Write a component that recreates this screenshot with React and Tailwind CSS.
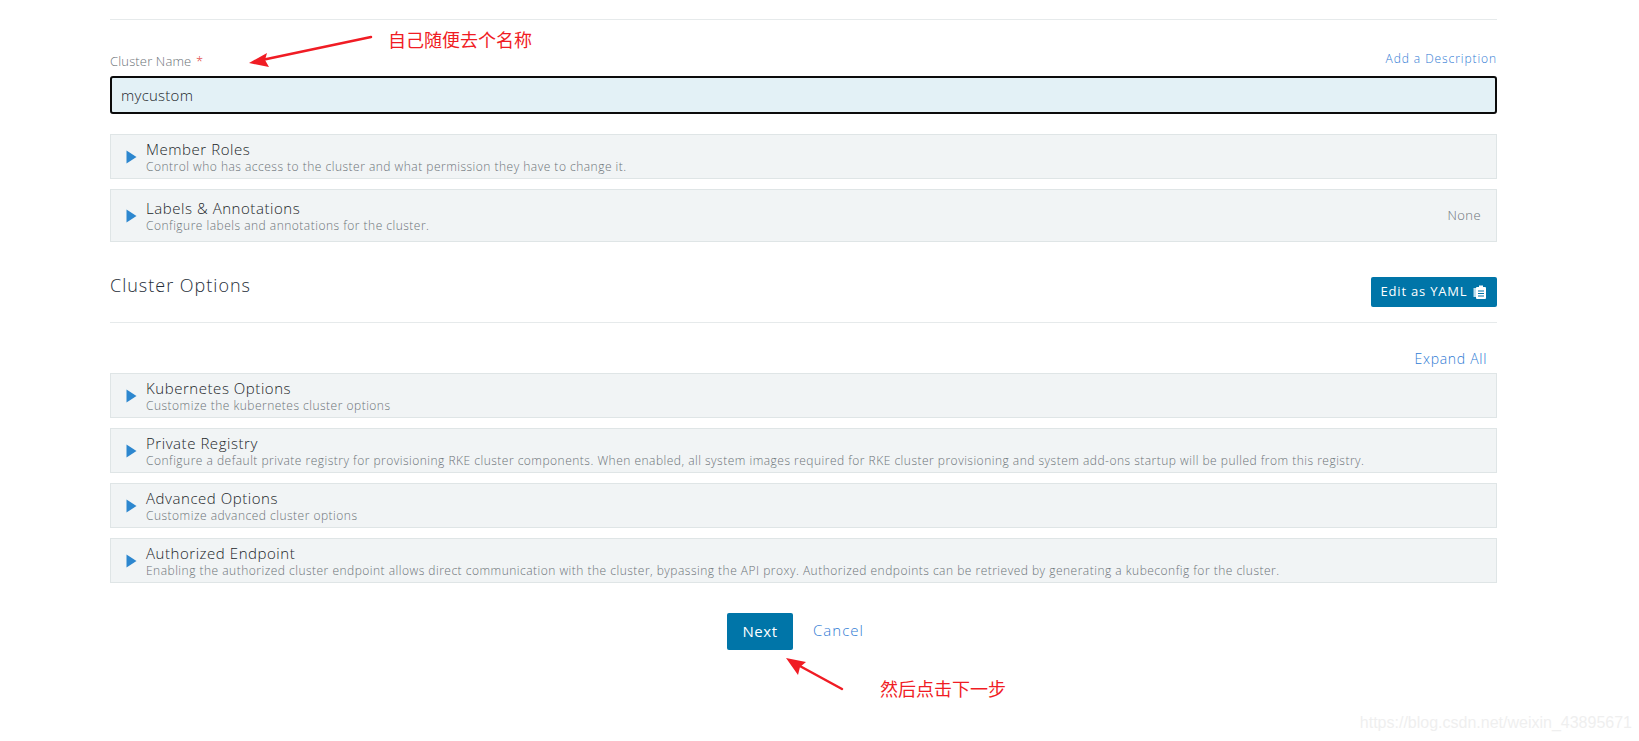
const FONT = "font-['Open_Sans',sans-serif]"

const Caret = () => (
  <svg width="11" height="14" viewBox="0 0 11 14" className="shrink-0">
    <path d="M0.5 0.5 L10.5 7 L0.5 13.5 Z" fill="#2d87cf" />
  </svg>
)

const Accordion = ({ title, desc, right, className = 'h-[45px]' }) => (
  <div className={`flex items-center border border-[#dfe5e6] bg-[#f1f4f5] pl-[15px] pr-[15px] ${className}`}>
    <Caret />
    <div className="ml-[9px] flex-1 min-w-0">
      <div className="text-[15px] leading-[19px] font-light tracking-[0.55px] text-[#22262a]">{title}</div>
      <div className="text-[12px] leading-[15px] font-light tracking-[0.49px] text-[#6c7378] whitespace-nowrap">{desc}</div>
    </div>
    {right && <div className="text-[13px] font-light tracking-[0.45px] text-[#6c7378]">{right}</div>}
  </div>
)

const ClipboardIcon = () => (
  <svg width="14" height="14" viewBox="0 0 14 14" className="ml-[6px]">
    <rect x="0.5" y="3" width="5" height="9" fill="#bfe0ee" />
    <rect x="3" y="2" width="10" height="12" rx="1" fill="#ffffff" />
    <rect x="6" y="0.5" width="4" height="3" fill="#ffffff" />
    <path d="M5 6h6M5 8.5h6M5 11h6" stroke="#0075a8" strokeWidth="1" />
  </svg>
)

export default function App() {
  return (
    <div className={`relative h-[741px] overflow-hidden bg-white ${FONT}`}>
      <main className="ml-[110px] w-[1387px] pt-[19px]">
        <div className="h-[1px] bg-[#e6eaeb]" />

        {/* Cluster name */}
        <div className="mt-[32px] flex h-[20px] items-center justify-between">
          <div className="text-[13px] font-light tracking-[0.15px] text-[#6c7378]">
            Cluster Name <span className="ml-[1px] text-[#e0403a]">*</span>
          </div>
          <a className="text-[12px] font-light tracking-[0.92px] text-[#2f7bd4] -mt-[7px]">Add a Description</a>
        </div>
        <div className="mt-[4px] flex h-[38px] items-center rounded-[3px] border-2 border-[#0b0b0b] bg-[#e3f1f6] px-[9px] text-[15px] font-light tracking-[0.25px] text-[#22262a]">
          mycustom
        </div>

        <div className="mt-[20px] flex flex-col gap-[10px]">
          <Accordion
            title="Member Roles"
            desc="Control who has access to the cluster and what permission they have to change it."
          />
          <Accordion
            title="Labels & Annotations"
            desc="Configure labels and annotations for the cluster."
            right="None"
            className="h-[53px]"
          />
        </div>

        {/* Cluster options */}
        <div className="mt-[35px] flex h-[30px] items-center justify-between">
          <h2 className="-mt-[13px] text-[18px] font-light tracking-[1px] text-[#252d38]">Cluster Options</h2>
          <button className="flex h-[30px] w-[126px] items-center justify-center rounded-[2px] bg-[#0075a8] text-[13px] tracking-[0.8px] text-white">
            Edit as YAML
            <ClipboardIcon />
          </button>
        </div>
        <div className="mt-[15px] h-[1px] bg-[#e6eaeb]" />

        <div className="mt-[25px] flex h-[20px] items-center justify-end pr-[10px]">
          <a className="text-[14px] font-light tracking-[0.7px] text-[#2f7bd4]">Expand All</a>
        </div>

        <div className="mt-[5px] flex flex-col gap-[10px]">
          <Accordion title="Kubernetes Options" desc="Customize the kubernetes cluster options" />
          <Accordion
            title="Private Registry"
            desc="Configure a default private registry for provisioning RKE cluster components. When enabled, all system images required for RKE cluster provisioning and system add-ons startup will be pulled from this registry."
          />
          <Accordion title="Advanced Options" desc="Customize advanced cluster options" />
          <Accordion
            title="Authorized Endpoint"
            desc="Enabling the authorized cluster endpoint allows direct communication with the cluster, bypassing the API proxy. Authorized endpoints can be retrieved by generating a kubeconfig for the cluster."
          />
        </div>

        {/* Footer buttons */}
        <div className="mt-[30px] flex items-center justify-center gap-[20px] pr-[16px]">
          <button className="h-[37px] w-[66px] rounded-[2px] bg-[#0075a8] text-[15px] font-medium tracking-[0.6px] text-white">Next</button>
          <a className="-mt-[2px] text-[15px] font-light tracking-[1px] text-[#2f7bd4]">Cancel</a>
        </div>
      </main>

      {/* Screenshot annotations */}
      <svg className="absolute left-0 top-0 pointer-events-none" width="1639" height="741">
        <path d="M371 37 L262 60" stroke="#f01c24" strokeWidth="2.5" strokeLinecap="round" />
        <path d="M249 63 L267 53 L265 60 L269 67 Z" fill="#f01c24" />
        <path d="M842 689 L798 665" stroke="#f01c24" strokeWidth="2.5" strokeLinecap="round" />
        <path d="M786 658 L806 662 L800 667 L798 675 Z" fill="#f01c24" />
      </svg>
      <div className="absolute left-[388px] top-[28px] text-[18px] leading-[26px] text-[#f01c24] font-['Liberation_Sans','Noto_Sans_CJK_SC',sans-serif]">
        自己随便去个名称
      </div>
      <div className="absolute left-[880px] top-[677px] text-[18px] leading-[26px] text-[#f01c24] font-['Liberation_Sans','Noto_Sans_CJK_SC',sans-serif]">
        然后点击下一步
      </div>
      <div className="absolute right-[7px] top-[713px] text-[16px] leading-[20px] text-[#efefef] font-['Liberation_Sans',sans-serif]">
        https://blog.csdn.net/weixin_43895671
      </div>
    </div>
  )
}
